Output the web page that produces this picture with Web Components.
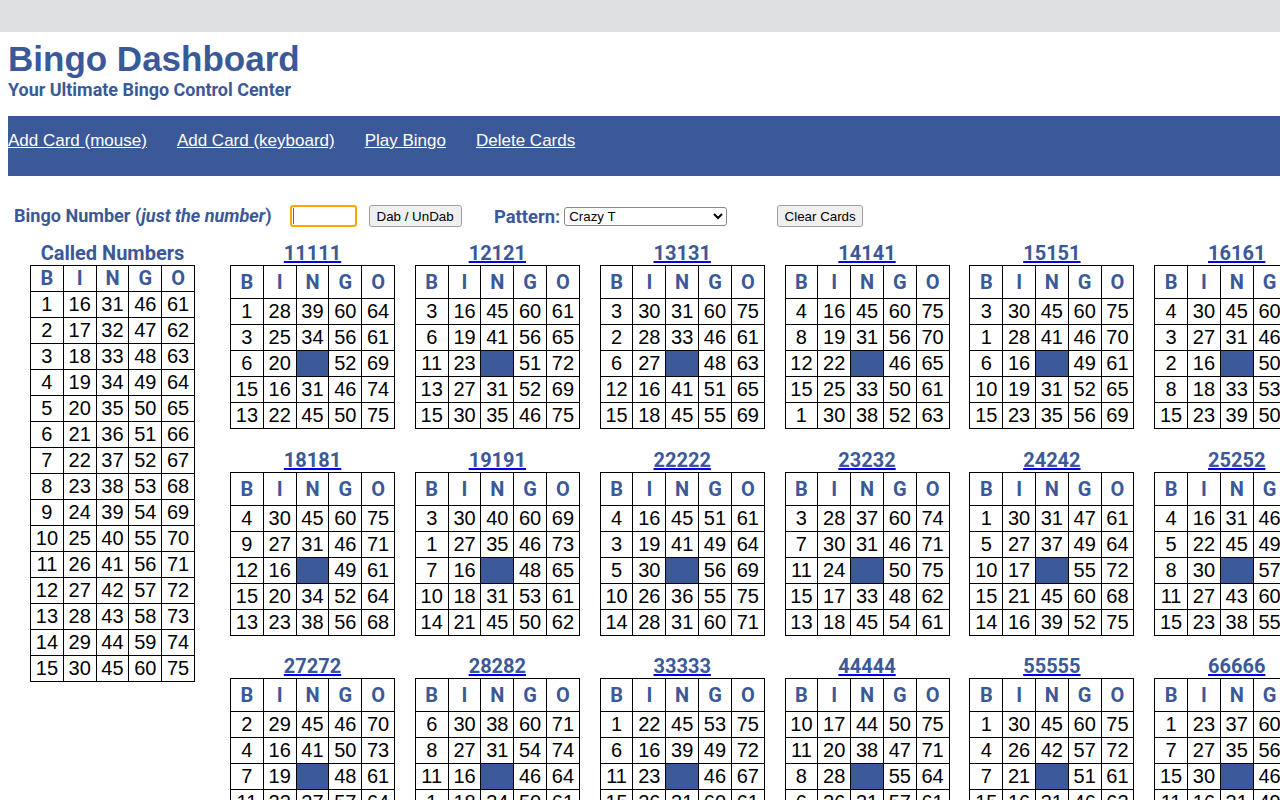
<!DOCTYPE html>
<html lang="en">
<head>
<meta charset="utf-8">
<title>Bingo Dashboard</title>
<style>
  html { overflow: hidden; }
  body { margin: 0; font-family: "Liberation Sans", Arial, sans-serif; background: #fff; }
  .page { width: 1500px; padding: 0 8px; }
</style>
</head>
<body>
<top-bar></top-bar>
<div class="page">
  <page-header></page-header>
  <nav-bar>
    <a href="#">Add Card (mouse)</a>
    <a href="#">Add Card (keyboard)</a>
    <a href="#">Play Bingo</a>
    <a href="#">Delete Cards</a>
  </nav-bar>
  <dab-controls></dab-controls>
  <bingo-board id="board"></bingo-board>
</div>

<script>
const BLUE = '#3b5998';

class TopBar extends HTMLElement {
  constructor() {
    super();
    this.attachShadow({ mode: 'open' });
    this.shadowRoot.innerHTML = `<style>:host { display: block; height: 32px; background: #dee0e2; }</style>`;
  }
}

class PageHeader extends HTMLElement {
  constructor() {
    super();
    this.attachShadow({ mode: 'open' });
    this.shadowRoot.innerHTML = `
      <style>
        :host { display: block; height: 84px; color: ${BLUE}; }
        h1 { margin: 0; padding-top: 6px; font: bold 35px/41px "Liberation Sans", Arial, sans-serif; }
        h2 { margin: 0; font: bold 17.95px/21px Roboto, sans-serif; }
      </style>
      <h1>Bingo Dashboard</h1>
      <h2>Your Ultimate Bingo Control Center</h2>`;
  }
}

class NavBar extends HTMLElement {
  constructor() {
    super();
    this.attachShadow({ mode: 'open' });
    this.shadowRoot.innerHTML = `
      <style>
        :host { display: flex; gap: 30px; height: 60px; box-sizing: border-box; padding-top: 14px; background: ${BLUE}; font: 17px/21px "Liberation Sans", Arial, sans-serif; }
        ::slotted(a) { color: #fff; }
      </style>
      <slot></slot>`;
  }
}

class DabControls extends HTMLElement {
  constructor() {
    super();
    this.attachShadow({ mode: 'open' });
    this.shadowRoot.innerHTML = `
      <style>
        :host { display: flex; align-items: center; height: 22px; margin-top: 29px; padding-left: 6px; color: ${BLUE}; }
        label { padding-bottom: 2px; font: bold 18.07px/21px Roboto, sans-serif; white-space: nowrap; }
        input, button, select { box-sizing: border-box; font: 13.33px "Liberation Sans", Arial, sans-serif; }
        .num { position: relative; display: flex; margin-left: 18px; }
        .num::after { content: ""; position: absolute; left: 3px; top: 3px; width: 1px; height: 16px; background: #666; }
        input { width: 67px; height: 22px; border: 2px solid #ffa500; outline: none; border-radius: 3px; background: #fff; }
        button { height: 22px; padding: 1px 0; color: #000; background: #efefef; border: 1px solid #a0a0a0; border-radius: 3px; }
        .dab { width: 93px; margin-left: 12px; }
        .pat { margin-left: 32.4px; padding-bottom: 0; font-size: 18.4px; }
        select { width: 163px; height: 19px; margin-left: 4px; color: #000; background: #fff; border: 1px solid #8a8a8a; border-radius: 3px; }
        .clear { width: 86px; margin-left: 50px; }
      </style>
      <label>Bingo Number (<i>just the number</i>)</label>
      <span class="num"><input type="text"></span>
      <button class="dab">Dab / UnDab</button>
      <label class="pat">Pattern:</label>
      <select><option>Crazy T</option></select>
      <button class="clear">Clear Cards</button>`;
  }
}

// rows is an array of five-number arrays, 0 is the free square
class BingoCard extends HTMLElement {
  constructor() {
    super();
    this.attachShadow({ mode: 'open' });
  }
  set data({ title, rows, link, headHeight }) {
    const head = ['B', 'I', 'N', 'G', 'O'].map(l => `<th>${l}</th>`).join('');
    const body = rows.map(r => '<tr>' + r.map(n =>
      n === 0 ? '<td class="free"></td>' : `<td>${n}</td>`).join('') + '</tr>').join('');
    this.shadowRoot.innerHTML = `
      <style>
        :host { display: block; width: 165px; flex: none; }
        .title { display: block; height: 24px; text-align: center; color: ${BLUE}; font: bold 20px/24px Roboto, sans-serif; }
        .title a { color: ${BLUE}; text-decoration-color: #0000ee; }
        table { border-collapse: collapse; table-layout: fixed; width: 165px; }
        th, td { box-sizing: border-box; padding: 0; border: 1px solid #000; text-align: center; overflow: hidden; }
        th { height: ${headHeight}px; padding-bottom: ${link ? 0 : 1}px; color: ${BLUE}; font: bold 20px/22px Roboto, sans-serif; }
        td { height: 26px; font: 20px/23px "Liberation Sans", Arial, sans-serif; color: #000; }
        td.free { background: ${BLUE}; }
      </style>
      <div class="title">${link ? `<a href="#">${title}</a>` : title}</div>
      <table><tr>${head}</tr>${body}</table>`;
  }
}

class BingoBoard extends HTMLElement {
  constructor() {
    super();
    this.attachShadow({ mode: 'open' });
    this.shadowRoot.innerHTML = `
      <style>
        :host { display: flex; align-items: flex-start; margin-top: 14px; }
        .called { margin-left: 22px; }
        .grid { display: grid; grid-template-columns: repeat(6, 165px); column-gap: 19.85px; row-gap: 18.6px; margin-left: 35px; }
      </style>
      <div class="called"><bingo-card id="called"></bingo-card></div>
      <div class="grid"></div>`;
  }
  connectedCallback() {
    const called = [];
    for (let i = 1; i <= 15; i++) called.push([i, i + 15, i + 30, i + 45, i + 60]);
    this.shadowRoot.getElementById('called').data = { title: 'Called Numbers', rows: called, headHeight: 26 };
    const grid = this.shadowRoot.querySelector('.grid');
    CARDS.forEach(([title, text]) => {
      const card = document.createElement('bingo-card');
      card.data = { title, link: true, headHeight: 33, rows: text.split('/').map(r => r.split(' ').map(Number)) };
      grid.appendChild(card);
    });
  }
}

const CARDS = [
  ['11111', '1 28 39 60 64/3 25 34 56 61/6 20 0 52 69/15 16 31 46 74/13 22 45 50 75'],
  ['12121', '3 16 45 60 61/6 19 41 56 65/11 23 0 51 72/13 27 31 52 69/15 30 35 46 75'],
  ['13131', '3 30 31 60 75/2 28 33 46 61/6 27 0 48 63/12 16 41 51 65/15 18 45 55 69'],
  ['14141', '4 16 45 60 75/8 19 31 56 70/12 22 0 46 65/15 25 33 50 61/1 30 38 52 63'],
  ['15151', '3 30 45 60 75/1 28 41 46 70/6 16 0 49 61/10 19 31 52 65/15 23 35 56 69'],
  ['16161', '4 30 45 60 75/3 27 31 46 70/2 16 0 50 61/8 18 33 53 65/15 23 39 50 69'],
  ['18181', '4 30 45 60 75/9 27 31 46 71/12 16 0 49 61/15 20 34 52 64/13 23 38 56 68'],
  ['19191', '3 30 40 60 69/1 27 35 46 73/7 16 0 48 65/10 18 31 53 61/14 21 45 50 62'],
  ['22222', '4 16 45 51 61/3 19 41 49 64/5 30 0 56 69/10 26 36 55 75/14 28 31 60 71'],
  ['23232', '3 28 37 60 74/7 30 31 46 71/11 24 0 50 75/15 17 33 48 62/13 18 45 54 61'],
  ['24242', '1 30 31 47 61/5 27 37 49 64/10 17 0 55 72/15 21 45 60 68/14 16 39 52 75'],
  ['25252', '4 16 31 46 61/5 22 45 49 64/8 30 0 57 69/11 27 43 60 75/15 23 38 55 71'],
  ['27272', '2 29 45 46 70/4 16 41 50 73/7 19 0 48 61/11 22 27 57 64/13 18 35 52 66'],
  ['28282', '6 30 38 60 71/8 27 31 54 74/11 16 0 46 64/1 18 34 50 61/14 21 40 47 69'],
  ['33333', '1 22 45 53 75/6 16 39 49 72/11 23 0 46 67/15 26 31 60 61/3 19 42 55 70'],
  ['44444', '10 17 44 50 75/11 20 38 47 71/8 28 0 55 64/6 26 31 57 61/2 19 36 46 68'],
  ['55555', '1 30 45 60 75/4 26 42 57 72/7 21 0 51 61/15 16 31 46 62/9 24 38 50 66'],
  ['66666', '1 23 37 60 75/7 27 35 56 70/15 30 0 46 61/11 16 31 49 64/4 20 40 52 68'],
];

customElements.define('top-bar', TopBar);
customElements.define('page-header', PageHeader);
customElements.define('nav-bar', NavBar);
customElements.define('dab-controls', DabControls);
customElements.define('bingo-card', BingoCard);
customElements.define('bingo-board', BingoBoard);
</script>
</body>
</html>
